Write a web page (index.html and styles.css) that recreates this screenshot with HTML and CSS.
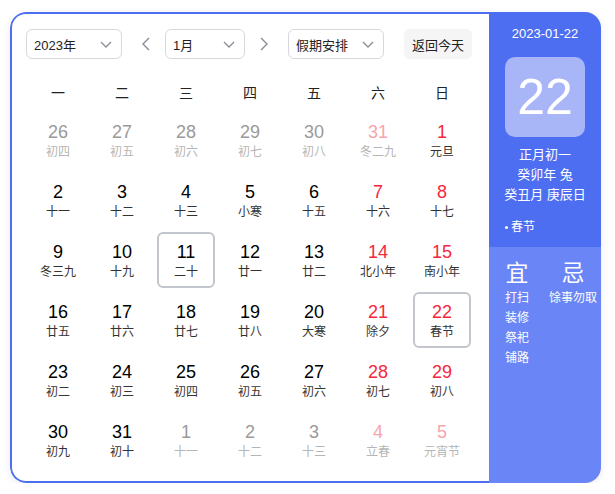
FILE: index.html
```html
<!DOCTYPE html>
<html lang="zh-CN">
<head>
<meta charset="utf-8">
<title>万年历</title>
<link rel="stylesheet" href="styles.css">
</head>
<body>
<div class="calendar">
  <div class="main">
    <div class="controls">
      <div class="select sel-year"><span>2023年</span><svg class="chev" viewBox="0 0 12 7"><path d="M1 1l5 5 5-5"/></svg></div>
      <svg class="arrow arrow-left" viewBox="0 0 8 14"><path d="M7 1L1 7l6 6"/></svg>
      <div class="select sel-month"><span>1月</span><svg class="chev" viewBox="0 0 12 7"><path d="M1 1l5 5 5-5"/></svg></div>
      <svg class="arrow arrow-right" viewBox="0 0 8 14"><path d="M1 1l6 6-6 6"/></svg>
      <div class="select sel-holiday"><span>假期安排</span><svg class="chev" viewBox="0 0 12 7"><path d="M1 1l5 5 5-5"/></svg></div>
      <div class="today-btn">返回今天</div>
    </div>
    <div class="weekdays">
      <span>一</span><span>二</span><span>三</span><span>四</span><span>五</span><span>六</span><span>日</span>
    </div>
    <div class="days">
      <div class="day other"><b>26</b><i>初四</i></div>
      <div class="day other"><b>27</b><i>初五</i></div>
      <div class="day other"><b>28</b><i>初六</i></div>
      <div class="day other"><b>29</b><i>初七</i></div>
      <div class="day other"><b>30</b><i>初八</i></div>
      <div class="day other weekend"><b>31</b><i>冬二九</i></div>
      <div class="day weekend"><b>1</b><i>元旦</i></div>

      <div class="day"><b>2</b><i>十一</i></div>
      <div class="day"><b>3</b><i>十二</i></div>
      <div class="day"><b>4</b><i>十三</i></div>
      <div class="day"><b>5</b><i>小寒</i></div>
      <div class="day"><b>6</b><i>十五</i></div>
      <div class="day weekend"><b>7</b><i>十六</i></div>
      <div class="day weekend"><b>8</b><i>十七</i></div>

      <div class="day"><b>9</b><i>冬三九</i></div>
      <div class="day"><b>10</b><i>十九</i></div>
      <div class="day boxed"><b>11</b><i>二十</i></div>
      <div class="day"><b>12</b><i>廿一</i></div>
      <div class="day"><b>13</b><i>廿二</i></div>
      <div class="day weekend"><b>14</b><i>北小年</i></div>
      <div class="day weekend"><b>15</b><i>南小年</i></div>

      <div class="day"><b>16</b><i>廿五</i></div>
      <div class="day"><b>17</b><i>廿六</i></div>
      <div class="day"><b>18</b><i>廿七</i></div>
      <div class="day"><b>19</b><i>廿八</i></div>
      <div class="day"><b>20</b><i>大寒</i></div>
      <div class="day weekend"><b>21</b><i>除夕</i></div>
      <div class="day weekend boxed"><b>22</b><i>春节</i></div>

      <div class="day"><b>23</b><i>初二</i></div>
      <div class="day"><b>24</b><i>初三</i></div>
      <div class="day"><b>25</b><i>初四</i></div>
      <div class="day"><b>26</b><i>初五</i></div>
      <div class="day"><b>27</b><i>初六</i></div>
      <div class="day weekend"><b>28</b><i>初七</i></div>
      <div class="day weekend"><b>29</b><i>初八</i></div>

      <div class="day"><b>30</b><i>初九</i></div>
      <div class="day"><b>31</b><i>初十</i></div>
      <div class="day other"><b>1</b><i>十一</i></div>
      <div class="day other"><b>2</b><i>十二</i></div>
      <div class="day other"><b>3</b><i>十三</i></div>
      <div class="day other weekend"><b>4</b><i>立春</i></div>
      <div class="day other weekend"><b>5</b><i>元宵节</i></div>
    </div>
  </div>
  <div class="side">
    <div class="side-top">
      <div class="side-date">2023-01-22</div>
      <div class="big-day">22</div>
      <div class="lunar-lines">
        <div>正月初一</div>
        <div>癸卯年 兔</div>
        <div>癸丑月 庚辰日</div>
      </div>
      <div class="festival"><span class="dot"></span>春节</div>
    </div>
    <div class="side-bottom">
      <div class="yiji">
        <div class="yiji-title">宜</div>
        <div>打扫</div>
        <div>装修</div>
        <div>祭祀</div>
        <div>铺路</div>
      </div>
      <div class="yiji">
        <div class="yiji-title">忌</div>
        <div>馀事勿取</div>
      </div>
    </div>
  </div>
</div>
</body>
</html>
```

FILE: styles.css
```css
* { box-sizing: border-box; }
html, body { margin: 0; padding: 0; background: #fff; }
body {
  font-family: "Liberation Sans", Arial, "Noto Sans CJK SC", sans-serif;
  color: #333;
}
.calendar {
  margin: 12px 0 0 10px;
  width: 591px;
  height: 471px;
  display: flex;
  border-radius: 16px;
  overflow: hidden;
  box-shadow: 0 2px 8px rgba(0, 0, 0, 0.08);
}
.main {
  width: 479px;
  height: 100%;
  background: #fff;
  border: 2px solid #4e6ef2;
  border-right: none;
  border-radius: 16px 0 0 16px;
  padding: 15px 13px 11px 14px;
}
.controls {
  display: flex;
  align-items: center;
  height: 30px;
}
.select {
  height: 30px;
  border: 1px solid #d7d8de;
  border-radius: 6px;
  display: flex;
  align-items: center;
  justify-content: space-between;
  padding: 0 9px 0 7px;
  font-size: 13px;
  color: #222;
}
.sel-year { width: 96px; }
.sel-month { width: 80px; }
.sel-holiday { width: 96px; }
.chev {
  width: 12px;
  height: 7px;
  fill: none;
  stroke: #8a8c94;
  stroke-width: 1.3;
}
.arrow {
  width: 8px;
  height: 14px;
  fill: none;
  stroke: #8a8c94;
  stroke-width: 1.4;
}
.arrow-left { margin: 0 15px 0 20px; }
.arrow-right { margin: 0 20px 0 15px; }
.today-btn {
  margin-left: 20px;
  height: 30px;
  width: 68px;
  border-radius: 6px;
  background: #f5f5f6;
  display: flex;
  align-items: center;
  justify-content: center;
  font-size: 13px;
  color: #222;
}
.weekdays {
  margin-top: 15px;
  height: 36px;
  display: grid;
  grid-template-columns: repeat(7, 64px);
  align-items: center;
  font-size: 14px;
  color: #222;
  font-family: "Noto Sans CJK SC", sans-serif;
}
.weekdays span { text-align: center; }
.days {
  display: grid;
  grid-template-columns: repeat(7, 64px);
  grid-auto-rows: 60px;
}
.day {
  margin: 2px 3px;
  border: 2px solid transparent;
  border-radius: 6px;
  display: flex;
  flex-direction: column;
  align-items: center;
  justify-content: center;
}
.day b {
  font-weight: normal;
  font-size: 18px;
  line-height: 22px;
  color: #000;
}
.day i {
  font-style: normal;
  font-size: 12px;
  line-height: 16px;
  color: #333;
  font-family: "Noto Sans CJK SC", sans-serif;
}
.day.weekend b { color: #f5283b; }
.day.other b { color: #9a9a9a; }
.day.other i { color: #b5b5b5; }
.day.other.weekend b { color: #f7a5aa; }
.day.boxed { border-color: #c3c5cd; }
.side {
  width: 112px;
  height: 100%;
  display: flex;
  flex-direction: column;
  color: #fff;
  font-family: "Liberation Sans", Arial, "Noto Sans CJK SC", sans-serif;
}
.side-top {
  height: 235px;
  background: #4e6ef2;
  padding-top: 12px;
  display: flex;
  flex-direction: column;
  align-items: center;
}
.side-date {
  font-size: 13px;
  line-height: 20px;
}
.big-day {
  margin-top: 13px;
  width: 80px;
  height: 80px;
  border-radius: 10px;
  background: #a8b6f8;
  display: flex;
  align-items: center;
  justify-content: center;
  font-size: 50px;
}
.lunar-lines {
  margin-top: 8px;
  font-size: 13px;
  line-height: 20px;
  text-align: center;
}
.festival {
  margin-top: 12px;
  align-self: flex-start;
  margin-left: 16px;
  font-size: 12px;
  line-height: 20px;
  display: flex;
  align-items: center;
}
.dot {
  width: 3px;
  height: 3px;
  border-radius: 50%;
  background: #fff;
  margin-right: 3px;
}
.side-bottom {
  flex: 1;
  background: #6a85f5;
  padding-top: 11px;
  display: grid;
  grid-template-columns: 56px 56px;
  align-items: start;
}
.yiji {
  text-align: center;
  font-size: 12px;
  line-height: 20px;
}
.yiji-title {
  font-size: 23px;
  line-height: 30px;
}
```
